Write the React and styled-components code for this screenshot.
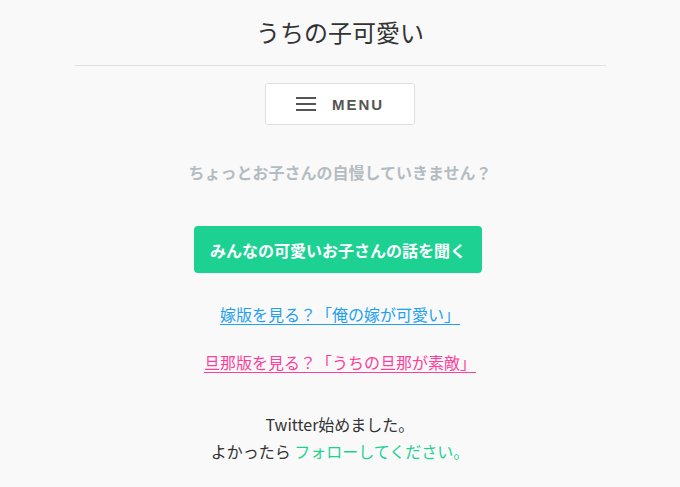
import React from 'react';
import styled, { createGlobalStyle } from 'styled-components';

const GlobalStyle = createGlobalStyle`
  html, body {
    margin: 0;
    padding: 0;
    background: #f9f9f9;
  }
  body {
    font-family: "Noto Sans CJK JP", "Noto Sans", sans-serif;
    color: #333;
  }
`;

const Page = styled.div`
  width: 680px;
  display: flex;
  flex-direction: column;
  align-items: center;
`;

const Header = styled.header`
  width: 531px;
  padding-top: 15px;
  padding-bottom: 16px;
  border-bottom: 1px solid #e2e2e2;
  text-align: center;
`;

const SiteTitle = styled.h1`
  margin: 0;
  font-size: 24px;
  font-weight: 400;
  line-height: 34px;
  color: #333;
`;

const MenuButton = styled.button`
  margin-top: 17px;
  width: 150px;
  height: 42px;
  display: flex;
  align-items: center;
  justify-content: center;
  gap: 16px;
  background: #fff;
  border: 1px solid #e0e0e0;
  border-radius: 3px;
  font-family: "Liberation Sans", Arial, sans-serif;
  font-weight: 700;
  font-size: 15px;
  letter-spacing: 2px;
  color: #555;
  padding: 0;
`;

const Burger = styled.span`
  display: flex;
  flex-direction: column;
  gap: 4px;
  width: 20px;

  span {
    display: block;
    height: 2px;
    background: #555;
  }
`;

const Lead = styled.p`
  margin: 35px 0 0;
  font-size: 16px;
  font-weight: 700;
  color: #b4bcc2;
  line-height: 24px;
`;

const CtaButton = styled.a`
  margin: 42px 4px 0 0;
  width: 288px;
  height: 47px;
  display: flex;
  align-items: center;
  justify-content: center;
  background: #1dd193;
  border-radius: 4px;
  color: #fff;
  font-size: 16px;
  font-weight: 700;
  text-decoration: none;
`;

const VersionLink = styled.a`
  margin-top: ${p => p.$gap}px;
  font-size: 16px;
  line-height: 24px;
  color: ${p => p.$color};
  text-decoration: underline;
  text-underline-offset: 3px;
`;

const Footer = styled.p`
  margin: 37px 0 0;
  font-size: 16px;
  line-height: 27px;
  color: #333;
  text-align: center;
`;

const Follow = styled.a`
  color: #1dd193;
  text-decoration: none;
`;

export default function App() {
  return (
    <>
      <GlobalStyle />
      <Page>
        <Header>
          <SiteTitle>うちの子可愛い</SiteTitle>
        </Header>
        <MenuButton>
          <Burger>
            <span />
            <span />
            <span />
          </Burger>
          MENU
        </MenuButton>
        <Lead>ちょっとお子さんの自慢していきません？</Lead>
        <CtaButton href="#">みんなの可愛いお子さんの話を聞く</CtaButton>
        <VersionLink href="#" $color="#1ea1f2" $gap={29}>嫁版を見る？「俺の嫁が可愛い」</VersionLink>
        <VersionLink href="#" $color="#ff3e9a" $gap={24}>旦那版を見る？「うちの旦那が素敵」</VersionLink>
        <Footer>
          Twitter始めました。<br />
          よかったら <Follow href="#">フォローしてください。</Follow>
        </Footer>
      </Page>
    </>
  );
}
